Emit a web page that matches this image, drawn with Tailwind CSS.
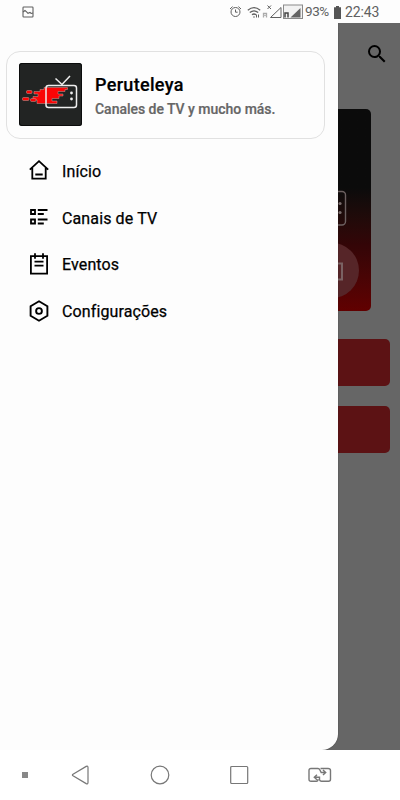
<!DOCTYPE html>
<html lang="pt">
<head>
<meta charset="utf-8">
<meta name="viewport" content="width=device-width, initial-scale=1">
<title>Peruteleya</title>
<script src="https://cdn.jsdelivr.net/npm/@tailwindcss/browser@4"></script>
</head>
<body class="flex h-[800px] w-[400px] flex-col overflow-hidden bg-[#fdfdfd] font-['Roboto',sans-serif]">
<header class="flex h-[23px] shrink-0 items-center pt-[1px] pl-[22px] text-[#606060]">
  <svg class="h-3 w-3" viewBox="0 0 12 12" fill="none" stroke="currentColor" stroke-width="1.1"><rect x="1" y="1" width="10" height="10" rx=".7"/><path d="M1 6l2-1.5 1.6 1.3L6 7.3l2-.8 1.2 1L11 7"/></svg>
  <svg class="ml-[195px] h-[14px] w-[13px]" viewBox="0 0 13 14" fill="none" stroke="currentColor"><circle cx="6.500" cy="7" r="4.500"/><path d="M6.500 4.500V7.200H8.600M1 4l2.600-2.400M12 4L9.400 1.600"/></svg>
  <svg class="ml-[5px] h-[14px] w-[14px]" viewBox="0 0 14 14" fill="none" stroke="currentColor" stroke-width="1.300"><path d="M.8 5.200Q7 .2 13.200 5.200M2.800 7.600Q7 4.200 11.200 7.600M5 9.800Q7 8.200 9 9.800"/><path d="M6.200 12h1.600M9.500 9.500v3M11.500 9.500v3" stroke-width="1"/></svg>
  <svg class="ml-[1px] h-[16px] w-[20px]" viewBox="0 0 20 16" fill="none" stroke="currentColor"><path d="M1.500 13.500V9.500h3v4" stroke="#aaa" stroke-width="1.300"/><path d="M1.500 11.500h3" stroke="#bbb"/><path d="M5.500 1.500l3.500 3.500M9 1.500L5.500 5M8.500 13.500h10.500V3.500z"/></svg>
  <svg class="ml-px h-[16px] w-[20px]" viewBox="0 0 20 16"><rect x=".5" y="1" width="19" height="13.500" fill="#f2f2f2" stroke="#8a8a8a"/><path d="M7.500 13.500L17.500 4v9.500z" fill="#646464"/><path d="M2 13.500V9h3v4.500" fill="none" stroke="#444" stroke-width="1.500"/></svg>
  <span class="ml-[2px] w-[27px] text-[13.500px] leading-none tracking-[-0.4px] whitespace-nowrap">93%</span>
  <svg class="ml-[2px] h-[13px] w-[7px]" viewBox="0 0 7 13" fill="#555"><path d="M2 0h3v1.300h2V13H0V1.300h2z"/></svg>
  <span class="ml-[4px] text-[14px] leading-none tracking-[-0.1px]">22:43</span>
</header>
<main class="relative h-[727px] shrink-0 overflow-hidden bg-[#666]">
  <div class="flex h-full flex-col">
    <div class="flex h-[85.500px] items-start justify-end pt-[19px] pr-[11px]">
      <svg class="h-6 w-6" viewBox="0 0 24 24"><path d="M15.500 14h-.79l-.28-.27A6.471 6.471 0 0 0 16 9.500 6.500 6.500 0 1 0 9.500 16c1.610 0 3.090-.59 4.230-1.570l.27.28v.79l5 4.990L20.490 19l-4.990-5zm-6 0a4.500 4.500 0 1 1 0-9 4.500 4.500 0 0 1 0 9z"/></svg>
    </div>
    <div class="relative mr-[29.500px] ml-[30px] h-[202px] shrink-0 overflow-hidden rounded-[5px] bg-linear-to-b from-[#0b0b0b] from-[39%] via-[#330507] via-[67%] to-[#610000]">
      <svg class="absolute top-0 right-0 h-[202px] w-[40px]" viewBox="0 0 40 202" fill="none" stroke="#6c6060" stroke-width="1.400"><circle cx="0" cy="161.500" r="28" fill="#562528" stroke="none"/><rect x="-30" y="82.500" width="44.500" height="33.500" rx="3.500"/><path d="M0 154.500h11v16H0" stroke="#7a6263" stroke-width="2"/><g fill="#7a6d6d" stroke="none"><circle cx="9" cy="94.500" r="1.600"/><circle cx="9" cy="103.500" r="1.600"/></g></svg>
    </div>
    <div class="mx-[10px] mt-[28.800px] h-[46.700px] shrink-0 rounded-[5px] bg-[#5c1214]"></div>
    <div class="mx-[10px] mt-5 h-[46.700px] shrink-0 rounded-[5px] bg-[#5c1214]"></div>
  </div>
  <aside class="absolute top-0 left-0 h-full w-[338px] rounded-br-[16px] bg-[#fdfdfd] px-[6px] pt-[28px] shadow-[0_0_1px_#222]">
    <div class="flex h-[88px] w-[319px] items-center rounded-[14px] border border-[#e1e1e1] pl-3">
      <svg class="relative -top-[0.500px] h-[63px] w-[63px] shrink-0" viewBox="0 0 63 63">
        <rect width="63" height="63" rx="2.500" fill="#222423"/><rect x=".5" y=".5" width="62" height="62" rx="2.500" fill="none" stroke="#0b0c0c"/>
        <g fill="#fa0505" stroke="#c9a09c" stroke-width=".5"><path d="M15 28.500h6v-2h4v-2h23.500v2H46v2h-7v2.500h5V33h-4v2.500h-7v2.500h5v2.500H18V37h-4v-3.500h5V31h-4z"/><rect x="7.500" y="27.500" width="5.500" height="3" rx="1"/><rect x="3.500" y="34.500" width="6.500" height="3" rx="1"/><rect x="11.500" y="35.500" width="5.500" height="3" rx="1"/></g>
        <rect x="27" y="22.500" width="30.500" height="22" rx="2.500" fill="none" stroke="#eee" stroke-width="1.500"/><path d="M36.500 15.500l6.500 6 8-8.500" fill="none" stroke="#eee" stroke-width="1.500"/>
        <circle cx="52.500" cy="30" r="1.400" fill="#eee"/><circle cx="52.500" cy="36" r="1.400" fill="#eee"/>
      </svg>
      <div class="ml-[13px] pt-[3px] whitespace-nowrap">
        <h1 class="text-[18px] leading-6 font-medium tracking-[0.32px] text-black [-webkit-text-stroke:0.2px]">Peruteleya</h1>
        <p class="text-[14px] leading-6 font-medium tracking-[-0.03px] text-[#666] [-webkit-text-stroke:0.2px]">Canales de TV y mucho más.</p>
      </div>
    </div>
    <nav class="mt-[9px] text-[16px] font-normal tracking-[0.120px] text-black [-webkit-text-stroke:0.25px]">
      <a class="flex h-[46.700px] items-center gap-[13.500px] pl-[22.500px]"><svg class="relative -top-px h-5 w-5" viewBox="0 0 20 20" fill="none" stroke="#000" stroke-width="1.800"><path d="M.8 9.700L10 1.200l9.200 8.500M3.300 8v10.600h13.400V8M6.300 14.500h7.400"/></svg><span class="pt-[1px]">Início</span></a>
      <a class="flex h-[46.700px] items-center gap-[13.500px] pl-[22.500px]"><svg class="relative -top-px h-5 w-5" viewBox="0 0 20 20" fill="none" stroke="#000" stroke-width="1.800"><path d="M2 3h4v4H2zM2 12.500h4v4H2zM8.800 3h9.700M8.800 7h6M8.800 12.500h9.700M8.800 16.500h6"/></svg><span class="pt-[1px]">Canais de TV</span></a>
      <a class="flex h-[46.700px] items-center gap-[13.500px] pl-[22.500px]"><svg class="relative -top-px h-[22px] w-5" viewBox="0 0 20 22" fill="none" stroke="#000" stroke-width="1.800"><path d="M1.900 3.200h16.200v17.400H1.900zM6 .3v5.500M14 .3v5.500M5.500 8.700h9M5.500 12.700h9"/></svg><span class="pt-[1px]">Eventos</span></a>
      <a class="flex h-[46.700px] items-center gap-[13.500px] pl-[22.500px]"><svg class="h-[22px] w-5" viewBox="0 0 20 22" fill="none" stroke="#000" stroke-width="1.900"><path d="M10 1.300l8.400 4.900v9.600L10 20.700l-8.400-4.900V6.200z"/><circle cx="10" cy="11" r="2.900"/></svg><span class="pt-[1px]">Configurações</span></a>
    </nav>
  </aside>
</main>
<footer class="flex h-[50px] shrink-0 items-center bg-white pl-[22px] text-[#777]">
  <div class="h-[6px] w-[6px] bg-[#888]"></div>
  <svg class="ml-[43px] h-5 w-[19px]" viewBox="0 0 19 20" fill="none" stroke="currentColor" stroke-width="1.200"><path d="M2 9.200L15.200 1.400q1.800-.8 1.800 1v15.200q0 1.800-1.800 1L2 10.800q-1.200-.8 0-1.600z"/></svg>
  <svg class="ml-[59.500px] h-5 w-5" viewBox="0 0 20 20" fill="none" stroke="currentColor" stroke-width="1.200"><circle cx="10" cy="10" r="8.800"/></svg>
  <svg class="ml-[59px] h-5 w-5" viewBox="0 0 20 20" fill="none" stroke="currentColor" stroke-width="1.200"><rect x="1.700" y="1.500" width="17" height="17" rx="1"/></svg>
  <svg class="ml-[59px] h-4 w-6" viewBox="0 0 24 16" fill="none" stroke="currentColor" stroke-width="1.400"><path d="M10 12.200q0 2-1.500 2H3q-2 0-2-2V3.500q0-2 2-2h7q1.300 0 1.800 1.200l1.400 2.800h4M12.500 1.500H20q2.500 0 2.500 2v8.700q0 2-2 2h-7q-1.500 0-2-1.500v-2.500H6.500M15 3l2.700 2.500L15 8M9 7.700l-2.700 2.500L9 12.700"/></svg>
</footer>
</body>
</html>
